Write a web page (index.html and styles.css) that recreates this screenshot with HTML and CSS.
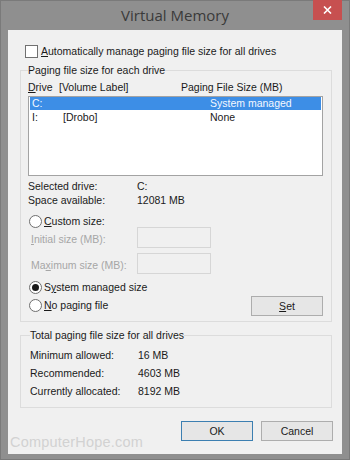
FILE: index.html
```html
<!DOCTYPE html>
<html lang="en">
<head>
  <meta charset="UTF-8">
  <title>Virtual Memory</title>
  <link rel="stylesheet" href="styles.css">
</head>
<body>
  <div class="window">
    <div class="titlebar">
      <span></span>
      <span class="title">Virtual Memory</span>
      <button class="close" aria-label="Close">
        <svg width="9" height="8" viewBox="0 0 9 8"><path d="M1 0.5 L8 7.5 M8 0.5 L1 7.5" stroke="#fff" stroke-width="1.6"/></svg>
      </button>
    </div>

    <div class="client">
      <label class="check"><span class="box"></span><span><u>A</u>utomatically manage paging file size for all drives</span></label>

      <fieldset class="group drives">
        <legend>Paging file size for each drive</legend>

        <div class="cols">
          <span class="c1"><u>D</u>rive</span>
          <span class="c2">[Volume Label]</span>
          <span class="c3">Paging File Size (MB)</span>
        </div>

        <div class="list">
          <div class="row selected">
            <span class="d1">C:</span><span class="d2"></span><span class="d3">System managed</span>
          </div>
          <div class="row">
            <span class="d1">I:</span><span class="d2">[Drobo]</span><span class="d3">None</span>
          </div>
        </div>

        <div class="info">
          <span>Selected drive:</span><span>C:</span>
          <span>Space available:</span><span>12081 MB</span>
        </div>

        <div class="radio custom"><span class="dot"></span><span><u>C</u>ustom size:</span></div>

        <div class="sizes">
          <span class="disabled"><u>I</u>nitial size (MB):</span><span class="field"></span>
          <span class="disabled">Ma<u>x</u>imum size (MB):</span><span class="field"></span>
        </div>

        <div class="bottom">
          <div class="radios">
            <div class="radio"><span class="dot on"></span><span>S<u>y</u>stem managed size</span></div>
            <div class="radio"><span class="dot"></span><span><u>N</u>o paging file</span></div>
          </div>
          <button class="btn set"><u>S</u>et</button>
        </div>
      </fieldset>

      <fieldset class="group totals">
        <legend>Total paging file size for all drives</legend>
        <div class="tgrid">
          <span>Minimum allowed:</span><span>16 MB</span>
          <span>Recommended:</span><span>4603 MB</span>
          <span>Currently allocated:</span><span>8192 MB</span>
        </div>
      </fieldset>

      <div class="actions">
        <button class="btn default">OK</button>
        <button class="btn">Cancel</button>
      </div>

      <span class="watermark">ComputerHope.com</span>
    </div>
  </div>
</body>
</html>
```

FILE: styles.css
```css
* {
  box-sizing: border-box;
}

body {
  margin: 0;
  font-family: 'Liberation Sans', Arial, sans-serif;
  font-size: 10.5px;
  color: #1a1a1a;
  background: #8f8f8f;
}

.window {
  width: 350px;
  height: 460px;
  background: #8f8f8f;
  border: 1px solid #7a7a7a;
  padding: 0 7px 5px 7px;
  display: flex;
  flex-direction: column;
}

.titlebar {
  height: 29px;
  display: grid;
  grid-template-columns: 1fr auto 1fr;
  align-items: start;
}

.title {
  font-family: 'Open Sans', sans-serif;
  font-size: 15px;
  color: #3a3a3a;
  line-height: 29px;
}

.close {
  justify-self: end;
  width: 29px;
  height: 20px;
  margin-top: -1px;
  border: none;
  padding: 0;
  background: #c75050;
  display: flex;
  align-items: center;
  justify-content: center;
}

.client {
  position: relative;
  flex: 1;
  background: #f0f0f0;
  padding-top: 14px;
}

/* checkbox */
.check {
  display: flex;
  align-items: center;
  gap: 3px;
  margin-left: 17px;
  line-height: 14px;
}

.box {
  width: 13px;
  height: 13px;
  border: 1px solid #707070;
  background: #fff;
}

/* group boxes */
.group {
  margin: 5px 10px 0 12px;
  border: 1px solid #dcdcdc;
  padding: 0 8px 5px 7px;
  min-width: 0;
}

.group legend {
  padding: 0;
  line-height: 14px;
}

.cols {
  display: flex;
  line-height: 14px;
  margin-top: 3px;
}

.cols .c1 { width: 31px; }
.cols .c2 { width: 122px; }

.list {
  margin-top: 2px;
  height: 80px;
  border: 1px solid #a3a3a3;
  background: #fff;
  padding: 0 1px;
}

.row {
  display: flex;
  height: 13px;
  line-height: 13px;
  padding-left: 2px;
  margin-bottom: 1px;
}

.row.selected {
  background: #3d8ee6;
  color: #f4f8ff;
}

.d1 { width: 31px; }
.d2 { width: 147px; }

.info,
.sizes,
.tgrid {
  display: grid;
  grid-template-columns: 109px auto;
  line-height: 14px;
}

.info {
  margin-top: 3px;
}

.radio {
  display: flex;
  align-items: center;
  gap: 2px;
  height: 13px;
  line-height: 13px;
}

.dot {
  width: 13px;
  height: 13px;
  margin-left: 1px;
  border-radius: 50%;
  border: 1px solid #6e6e6e;
  background: #fff;
  display: flex;
  align-items: center;
  justify-content: center;
}

.dot.on::after {
  content: "";
  width: 7px;
  height: 7px;
  border-radius: 50%;
  background: #1a1a1a;
}

.custom {
  margin-top: 8px;
}

.sizes {
  margin-top: -1px;
  row-gap: 5px;
  align-items: center;
}

.sizes .disabled {
  color: #a6a6a6;
  padding-left: 3px;
  padding-top: 2px;
}

.field {
  width: 74px;
  height: 21px;
  border: 1px solid #d6d6d6;
  background: #f0f0f0;
}

.bottom {
  display: flex;
  justify-content: space-between;
  align-items: flex-start;
  margin-top: 7px;
}

.radios {
  display: flex;
  flex-direction: column;
  gap: 5px;
}

.btn {
  font: inherit;
  color: #1a1a1a;
  width: 72px;
  height: 20px;
  padding: 0;
  border: 1px solid #adadad;
  background: #e6e6e6;
}

.set {
  margin-top: 15px;
}

.totals {
  margin-top: 6px;
  padding: 0 8px 7px 9px;
}

.tgrid {
  grid-template-columns: 108px auto;
  line-height: 18px;
  margin-top: 4px;
}

.actions {
  display: flex;
  justify-content: flex-end;
  gap: 8px;
  margin: 13px 9px 0 0;
}

.btn.default {
  border-color: #3c7fb1;
}

.watermark {
  position: absolute;
  left: 2px;
  bottom: 4px;
  font-size: 14.5px;
  color: #d2d2d2;
  letter-spacing: 0.2px;
}
```
